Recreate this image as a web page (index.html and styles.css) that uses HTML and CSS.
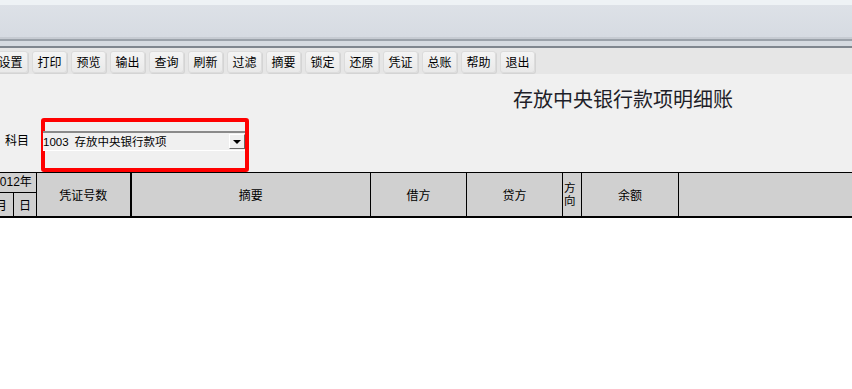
FILE: index.html
```html
<!DOCTYPE html>
<html lang="zh-CN">
<head>
    <meta charset="UTF-8">
    <meta name="viewport" content="width=device-width, initial-scale=1.0">
    <title>存放中央银行款项明细账</title>
    <link rel="stylesheet" href="styles.css">
</head>
<body>
    <div class="window">
        <div class="frame-top"></div>

        <div class="toolbar">
            <button>设置</button>
            <button>打印</button>
            <button>预览</button>
            <button>输出</button>
            <button>查询</button>
            <button>刷新</button>
            <button>过滤</button>
            <button>摘要</button>
            <button>锁定</button>
            <button>还原</button>
            <button>凭证</button>
            <button>总账</button>
            <button>帮助</button>
            <button>退出</button>
        </div>

        <div class="report-head">
            <h1 class="report-title">存放中央银行款项明细账</h1>
            <div class="subject-row">
                <span class="subject-label">科目</span>
                <div class="mark-box">
                    <div class="combo">
                        <span class="combo-text"><span class="code">1003</span>存放中央银行款项</span>
                        <span class="combo-btn"></span>
                    </div>
                </div>
            </div>
        </div>

        <table class="ledger">
            <colgroup>
                <col class="c-month">
                <col class="c-day">
                <col class="c-voucher">
                <col class="c-summary">
                <col class="c-debit">
                <col class="c-credit">
                <col class="c-dir">
                <col class="c-balance">
                <col class="c-rest">
            </colgroup>
            <thead>
                <tr class="row-year">
                    <th colspan="2">2012年</th>
                    <th rowspan="2" class="thick">凭证号数</th>
                    <th rowspan="2">摘要</th>
                    <th rowspan="2">借方</th>
                    <th rowspan="2">贷方</th>
                    <th rowspan="2" class="dir">方<br>向</th>
                    <th rowspan="2">余额</th>
                    <th rowspan="2"></th>
                </tr>
                <tr class="row-date">
                    <th>月</th>
                    <th>日</th>
                </tr>
            </thead>
        </table>
    </div>
</body>
</html>
```

FILE: styles.css
```css
body {
    margin: 0;
    padding: 0;
    background-color: #ffffff;
    font-family: "Liberation Sans", "Noto Sans CJK SC", sans-serif;
    color: #000;
}

.window {
    width: 852px;
    height: 389px;
    overflow: hidden;
    background-color: #ffffff;
}

/* window frame strip above the toolbar */
.frame-top {
    height: 48px;
    background:
        linear-gradient(to bottom,
            #eef2f5 0px, #eef2f5 5px,
            #dde1e7 5px, #d6dbe2 37px,
            #c6cbd2 37px, #c6cbd2 39px,
            #9aa1a9 39px, #9aa1a9 41px,
            #d5dae0 41px, #d5dae0 46px,
            #7f868e 46px, #7f868e 48px);
}

.toolbar {
    display: flex;
    gap: 4px;
    height: 26px;
    padding-top: 3px;
    margin-left: -7px;
    box-sizing: border-box;
    background-color: #e6e6e6;
}

.toolbar button {
    width: 35px;
    height: 22px;
    padding: 0;
    font-family: "Noto Sans CJK SC", sans-serif;
    font-size: 12px;
    line-height: 20px;
    color: #000;
    background: linear-gradient(to bottom, #f4f4f4, #e9e9e9);
    border: 1px solid #dcdcdc;
    border-radius: 3px;
    box-shadow: 1px 1px 0 #d4d4d4;
}

.report-head {
    height: 98px;
    padding-top: 15px;
    box-sizing: border-box;
    background-color: #f0f0f0;
}

.report-title {
    margin: 0 0 9px 513px;
    font-family: "Noto Sans CJK SC", sans-serif;
    font-size: 20px;
    font-weight: normal;
    line-height: 20px;
    color: #1e1e28;
    white-space: nowrap;
}

.subject-row {
    display: flex;
    align-items: flex-start;
    gap: 12px;
    padding-left: 5px;
}

.subject-label {
    margin-top: 16px;
    font-family: "Noto Sans CJK SC", sans-serif;
    font-size: 12px;
    line-height: 12px;
}

.mark-box {
    width: 208px;
    height: 54px;
    padding-top: 9px;
    box-sizing: border-box;
    border: 4px solid #ff0000;
    border-radius: 3px;
}

.combo {
    display: flex;
    align-items: center;
    justify-content: space-between;
    height: 20px;
    margin-left: -2px;
    box-sizing: border-box;
    border-top: 2px solid #8a8a8a;
    border-bottom: 1px solid #ffffff;
    background-color: #f0f0f0;
}

.combo-text {
    font-family: "Liberation Sans", "Noto Sans CJK SC", sans-serif;
    font-size: 11.5px;
    line-height: 12px;
    white-space: nowrap;
}

.combo-text .code {
    margin-right: 6px;
}

.combo-btn {
    position: relative;
    width: 16px;
    height: 15px;
    box-sizing: border-box;
    background-color: #f0f0f0;
    border-top: 1px solid #ffffff;
    border-left: 1px solid #ffffff;
    border-right: 1px solid #696969;
    border-bottom: 1px solid #696969;
}

.combo-btn::after {
    content: "";
    position: absolute;
    left: 3px;
    top: 5px;
    border-left: 4px solid transparent;
    border-right: 4px solid transparent;
    border-top: 4px solid #000;
}

.ledger {
    width: 864px;
    margin-left: -12px;
    border-collapse: collapse;
    table-layout: fixed;
    background-color: #d0d0d0;
}

.c-month { width: 25px; }
.c-day { width: 23px; }
.c-voucher { width: 94px; }
.c-summary { width: 240px; }
.c-debit { width: 96px; }
.c-credit { width: 96px; }
.c-dir { width: 19px; }
.c-balance { width: 97px; }
.c-rest { width: 174px; }

.ledger th {
    padding: 0;
    font-family: "Noto Sans CJK SC", sans-serif;
    font-size: 12px;
    font-weight: normal;
    line-height: 13px;
    text-align: center;
    border: 1px solid #000;
    border-bottom-width: 2px;
    white-space: nowrap;
}

.ledger th.thick {
    border-right-width: 2px;
}

.ledger th.dir {
    font-size: 11.5px;
    line-height: 13px;
    text-align: left;
    padding-left: 1px;
}

.row-year th {
    border-top-width: 1px;
}

.row-year {
    height: 20px;
}

.row-date {
    height: 24px;
}

.row-year th[colspan] {
    border-bottom-width: 1px;
    font-family: "Liberation Sans", "Noto Sans CJK SC", sans-serif;
}
```
